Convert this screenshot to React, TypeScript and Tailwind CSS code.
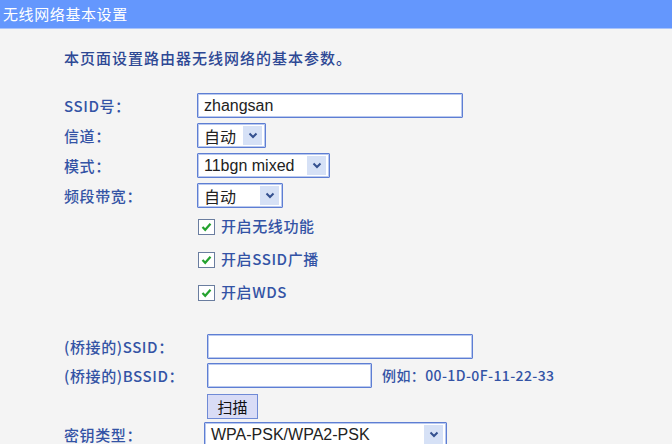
import React from 'react';

const cjk = { fontFamily: '"Noto Sans CJK SC", "Liberation Sans", sans-serif' };
const latin = { fontFamily: '"Liberation Sans", "Noto Sans CJK SC", sans-serif' };

function Chevron() {
  return (
    <svg width="10" height="7" viewBox="0 0 10 7">
      <path d="M1.5 1.5 L5 5 L8.5 1.5" fill="none" stroke="#34508f" strokeWidth="2" />
    </svg>
  );
}

function Select({ value, width, cjkValue }: { value: string; width: string; cjkValue?: boolean }) {
  return (
    <div
      className={`${width} h-[25px] flex items-center bg-white border border-[#5e7ed3] shadow-[inset_0_0_0_1px_#b9c9ef] rounded-[1px]`}
    >
      <span
        className="flex-1 pl-[6px] text-[16px] text-[#222] leading-[20px] whitespace-nowrap"
        style={cjkValue ? cjk : latin}
      >
        {value}
      </span>
      <span className="w-[19px] h-[19px] mr-[3px] bg-[#d6e1f6] flex items-center justify-center">
        <Chevron />
      </span>
    </div>
  );
}

function TextInput({ width, value }: { width: string; value?: string }) {
  return (
    <div
      className={`${width} h-[25px] flex items-center bg-white border border-[#5e7ed3] shadow-[inset_0_0_0_1px_#b9c9ef] rounded-[1px] pl-[6px] text-[16px] text-[#222]`}
      style={latin}
    >
      {value}
    </div>
  );
}

function Check({ label }: { label: string }) {
  return (
    <div className="h-[33px] flex items-center gap-[6px] pl-[1px]">
      <span className="w-[17px] h-[16px] bg-white border border-[#6a7d9f] flex items-center justify-center">
        <svg width="11" height="10" viewBox="0 0 11 10">
          <path d="M1.5 5 L4.2 7.8 L9.5 1.8" fill="none" stroke="#24a22e" strokeWidth="2.2" />
        </svg>
      </span>
      <span className="text-[15px] font-medium text-[#3353a5] tracking-[0.6px]" style={cjk}>
        {label}
      </span>
    </div>
  );
}

function Label({ text, width }: { text: string; width: string }) {
  return (
    <div
      className={`${width} shrink-0 text-[15px] font-medium text-[#3353a5] tracking-[0.6px] leading-[20px]`}
      style={cjk}
    >
      {text}
    </div>
  );
}

export default function App() {
  return (
    <div className="w-[672px] h-[444px] bg-[#f4f4f4] overflow-hidden">
      <div
        className="h-[29px] bg-[#6497fd] border-b border-[#a9c3fb] flex items-center pl-[3px] text-[15px] text-white tracking-[0.6px]"
        style={cjk}
      >
        无线网络基本设置
      </div>

      <div className="pl-[64px]">
        <div
          className="mt-[19px] h-[20px] flex items-center text-[15px] font-medium text-[#2d4894] tracking-[1px]"
          style={cjk}
        >
          本页面设置路由器无线网络的基本参数。
        </div>

        <div className="mt-[25px] flex flex-col gap-[5px]">
          <div className="flex items-center">
            <Label text="SSID号：" width="w-[133px]" />
            <TextInput width="w-[266px]" value="zhangsan" />
          </div>
          <div className="flex items-center">
            <Label text="信道：" width="w-[133px]" />
            <Select value="自动" width="w-[69px]" cjkValue />
          </div>
          <div className="flex items-center">
            <Label text="模式：" width="w-[133px]" />
            <Select value="11bgn mixed" width="w-[133px]" />
          </div>
          <div className="flex items-center">
            <Label text="频段带宽：" width="w-[133px]" />
            <Select value="自动" width="w-[86px]" cjkValue />
          </div>
        </div>

        <div className="mt-[2px] pl-[133px]">
          <Check label="开启无线功能" />
          <Check label="开启SSID广播" />
          <Check label="开启WDS" />
        </div>

        <div className="mt-[25px] flex items-center">
          <Label text="(桥接的)SSID：" width="w-[143px]" />
          <TextInput width="w-[266px]" />
        </div>
        <div className="mt-[4px] flex items-center">
          <Label text="(桥接的)BSSID：" width="w-[143px]" />
          <TextInput width="w-[165px]" />
          <span className="ml-[10px] text-[14px] font-medium text-[#3353a5] tracking-[0.4px]" style={cjk}>
            例如：00-1D-0F-11-22-33
          </span>
        </div>
        <div className="mt-[6px] pl-[143px]">
          <button
            className="w-[51px] h-[25px] bg-[#d9dcf6] border border-[#6f8ad6] text-[15px] text-[#111] leading-[20px]"
            style={cjk}
          >
            扫描
          </button>
        </div>
        <div className="mt-[3px] flex items-center">
          <Label text="密钥类型：" width="w-[140px]" />
          <Select value="WPA-PSK/WPA2-PSK" width="w-[243px]" />
        </div>
      </div>
    </div>
  );
}
